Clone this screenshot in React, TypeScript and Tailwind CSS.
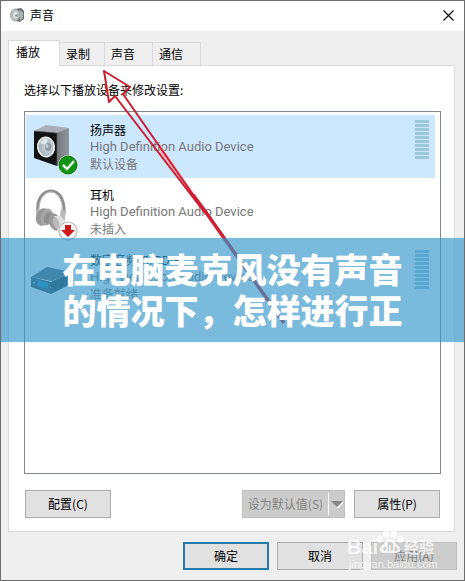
import type { ReactNode } from "react";

const TABS = [
  { label: "播放", width: "w-[52px]" },
  { label: "录制", width: "w-[45px]" },
  { label: "声音", width: "w-12" },
  { label: "通信", width: "w-12" },
];

function TitleIcon() {
  return (
    <svg viewBox="0 0 14 14" className="w-[14px] h-[14px]" aria-hidden="true">
      <path d="M5 1 11 0l3 3v8l-4 3-4-1z" fill="#66706f" />
      <path d="m9 2 4 2v6l-3 3z" fill="#a9b1b1" />
      <ellipse cx="5" cy="7" rx="4.5" ry="6" fill="#b6bebe" stroke="#a3abab" />
      <ellipse cx="5.500" cy="7" rx="2.400" ry="3.600" fill="#dce1e1" />
      <circle cx="6.500" cy="7.500" r="1.300" fill="#88908f" />
    </svg>
  );
}

function SpeakerIcon() {
  return (
    <svg viewBox="0 0 50 54" className="w-[50px] h-[54px] overflow-visible" aria-hidden="true">
      <defs>
        <linearGradient id="side" x1="0" x2="1">
          <stop offset="0" stopColor="#74777b" />
          <stop offset="1" stopColor="#919499" />
        </linearGradient>
        <radialGradient id="cone" cx=".6" cy=".55">
          <stop offset="0" stopColor="#8c9aa3" />
          <stop offset=".35" stopColor="#c5ced3" />
          <stop offset="1" stopColor="#a9b4ba" />
        </radialGradient>
      </defs>
      <path d="m5 9 12-6 23 3-12 6z" fill="#aaaeb4" />
      <path d="m28 11 12-5v29l-12 9z" fill="url(#side)" />
      <path d="m5 9 23 2v33L5 36z" fill="#111213" />
      <path d="m5 9 23 2v33" fill="none" stroke="#5b5e61" strokeWidth=".7" />
      <ellipse cx="17" cy="25" rx="9" ry="10.500" transform="rotate(-8 17 25)" fill="#f3f5f5" />
      <ellipse cx="17" cy="25" rx="7.500" ry="9" transform="rotate(-8 17 25)" fill="url(#cone)" />
      <path d="M11 21q3-6 8-4l-2 6z" fill="#dfe5e8" />
      <ellipse cx="19" cy="25" rx="3" ry="4" fill="#8b9aa5" />
      <ellipse cx="18" cy="24" rx="1.500" ry="2" fill="#c4cfd5" />
      <circle cx="39" cy="43" r="10" fill="#e5f3e3" />
      <circle cx="39" cy="43" r="9" fill="#119316" stroke="#08760c" />
      <path d="m34 43 4 4 7-8" fill="none" stroke="#e9fbe7" strokeWidth="2.500" />
    </svg>
  );
}

function HeadphonesIcon() {
  return (
    <svg viewBox="0 0 50 54" className="w-[50px] h-[54px] overflow-visible" aria-hidden="true">
      <path d="M9 27C7 12 14 4 22 4c9 0 14 10 13 24" fill="none" stroke="#8d8d8d" strokeWidth="3" />
      <path d="M10 26C9 13 15 5 22 5c8 0 12 11 11 19" fill="none" stroke="#c4c4c4" />
      <path d="m8 22 4 1-1 9-4-1zM32 22l4 2v12l-6-2z" fill="#b9b9b9" />
      <ellipse cx="14" cy="30" rx="7" ry="9" transform="rotate(18 14 30)" fill="#999" />
      <ellipse cx="18" cy="30" rx="6" ry="8.500" transform="rotate(14 18 30)" fill="#a8a8a8" />
      <ellipse cx="19" cy="31" rx="4" ry="6" transform="rotate(14 19 31)" fill="#8e8e8e" />
      <ellipse cx="26" cy="35" rx="6" ry="9" transform="rotate(-22 26 35)" fill="#999" />
      <path d="m25 29 7 0 5 6-2 10-7-1q3-8-3-15" fill="#e0e0e0" />
      <ellipse cx="27" cy="36" rx="3" ry="6" transform="rotate(-15 27 36)" fill="#bababa" />
      <circle cx="39" cy="44" r="9" fill="#f8f8f8" stroke="#b9b9b9" strokeWidth="1.200" />
      <path d="M36 38h6v5h4l-7 7-7-7h4z" fill="#cf1719" />
    </svg>
  );
}

function ReceiverIcon() {
  return (
    <svg viewBox="0 0 50 54" className="w-[50px] h-[54px]" aria-hidden="true">
      <path d="m2 25 16-10 24 5-19 9z" fill="#52646e" />
      <path d="m2 25 20 5v12L2 35z" fill="#354a56" />
      <path d="m22 30 20-10v12L22 42z" fill="#263a45" />
      <path d="m9 28 10 3v6l-10-3z" fill="#1686b5" />
      <path d="m4 30 2 1m15 4 1 1" stroke="#c3d6df" />
    </svg>
  );
}

function LevelMeter() {
  return (
    <div className="flex flex-col gap-px pt-[5px]" aria-hidden="true">
      {Array.from({ length: 10 }, (_, i) => (
        <span key={i} className="block w-[14px] h-[3px] bg-[#9dc8dc]" />
      ))}
    </div>
  );
}

type DeviceProps = {
  icon: ReactNode;
  name: string;
  status: string;
  selected?: boolean;
  meter?: boolean;
};

function Device({ icon, name, status, selected, meter }: DeviceProps) {
  return (
    <li className={`flex items-start h-[63px] pl-[3px] pr-[6px] ${selected ? "bg-[#cce8ff]" : ""}`}>
      <div className="pt-[7px]">{icon}</div>
      <div className="flex-1 pl-[11px] pt-[6px] leading-[17px] text-[#777]">
        <p className="text-black">{name}</p>
        <p className="text-[13px] whitespace-nowrap font-['Roboto',sans-serif]">High Definition Audio Device</p>
        <p>{status}</p>
      </div>
      {meter && <LevelMeter />}
    </li>
  );
}

function Button({ children, primary, disabled }: { children: ReactNode; primary?: boolean; disabled?: boolean }) {
  const look = primary
    ? "border-2 border-[#2779aa] bg-[#e1e1e1]"
    : disabled
      ? "border border-[#bfbfbf] bg-[#cccccc] text-[#838383]"
      : "border border-[#adadad] bg-[#e1e1e1]";
  return (
    <button type="button" disabled={disabled} className={`w-[86px] h-7 flex items-center justify-center ${look}`}>
      {children}
    </button>
  );
}

function Arrow() {
  return (
    <svg viewBox="0 0 190 260" className="absolute left-[99px] top-[67px] w-[190px] h-[260px] pointer-events-none" aria-hidden="true">
      <path d="M60 76 105 141v4L60 86z" fill="#f7bac6" />
      <path
        d="M105 145 15 28l-6 6L4 3l26 16-7 7 82 118"
        fill="none"
        stroke="#cb1e30"
        strokeWidth="2"
        strokeLinejoin="round"
      />
      <path d="m93 127 12 16 79 112" fill="none" stroke="#cf1e32" strokeWidth="3.500" />
    </svg>
  );
}

function Watermark() {
  return (
    <div className="absolute right-[27px] bottom-[6px] w-[90px] h-[46px] text-white/75 font-['Liberation_Sans',sans-serif] pointer-events-none">
      <svg viewBox="0 0 30 28" className="absolute left-[29px] top-0 w-7 h-[26px]" aria-hidden="true">
        <g fill="#fff" fillOpacity=".75">
          <ellipse cx="11" cy="6" rx="3.500" ry="5" />
          <ellipse cx="19" cy="6" rx="3.500" ry="5" />
          <ellipse cx="4" cy="12" rx="3" ry="4" />
          <ellipse cx="26" cy="12" rx="3" ry="4" />
          <path
            fillRule="evenodd"
            d="M15 12c-5 0-6 5-9 7-4 4-2 8 3 8h12c5 0 7-4 3-8-3-2-4-7-9-7m0 3c3 0 4 4 7 6 2 2 1 4-1 4H9c-2 0-3-2-1-4 3-2 4-6 7-6"
          />
        </g>
      </svg>
      <div className="flex items-end h-[29px] leading-5 font-bold">
        <span className="w-[34px] text-[20px]">Bai</span>
        <span className="w-[23px] text-[12px] leading-[18px]">du</span>
        <span className="text-[15px] font-['Noto_Sans_CJK_SC',sans-serif]">经验</span>
      </div>
      <p className="pl-[2px] text-[11px] leading-[14px]">jingyan.baidu.com</p>
    </div>
  );
}

export default function App() {
  return (
    <div className="relative flex flex-col w-full min-h-screen bg-[#efefef] border border-[#6d6d6d] text-black text-[12px] font-['Noto_Sans_CJK_SC',sans-serif]">
      <header className="flex items-center h-[30px] bg-white pl-[9px] pr-[10px] pb-[2px]">
        <TitleIcon />
        <h1 className="flex-1 pl-[6px]">声音</h1>
        <button type="button" aria-label="关闭">
          <svg viewBox="0 0 11 11" className="w-[11px] h-[11px]">
            <path d="m.5.5 10 10m0-10-10 10" stroke="#111" strokeWidth="1.200" />
          </svg>
        </button>
      </header>

      <main className="flex-1 flex flex-col px-[7px] pt-[9px]">
        <div role="tablist" className="flex items-end pr-2">
          {TABS.map(({ label, width }, i) => (
            <button
              key={label}
              type="button"
              role="tab"
              aria-selected={i === 0}
              className={`${width} ${
                i === 0
                  ? "relative z-10 -mb-px h-[26px] bg-white border border-b-0 border-[#d9d9d9] text-left pl-[7px] pb-1"
                  : "h-[23px] flex items-center border border-l-0 border-b-0 border-[#d9d9d9] pl-[6px]"
              }`}
            >
              {label}
            </button>
          ))}
        </div>

        <section className="flex-1 flex flex-col bg-white border border-[#d9d9d9] pl-[15px] pr-[13px] mr-[2px]">
          <p className="pt-[15px] pb-3 leading-[18px]">选择以下播放设备来修改设置:</p>
          <ul className="flex-1 flex flex-col gap-[2px] border border-[#828790] pt-[3px] pl-px pr-[5px]">
            <Device icon={<SpeakerIcon />} name="扬声器" status="默认设备" selected meter />
            <Device icon={<HeadphonesIcon />} name="耳机" status="未插入" />
            <Device icon={<ReceiverIcon />} name="数字音频(S/PDIF)" status="准备就绪" meter />
          </ul>
          <div className="flex items-center pt-4 pb-[13px] px-px">
            <Button>配置(C)</Button>
            <div className="ml-auto mr-[9px] flex h-7 w-[103px] border border-[#bfbfbf] bg-[#cccccc] text-[#838383]">
              <button type="button" disabled className="flex-1">
                设为默认值(S)
              </button>
              <button type="button" disabled aria-label="更多默认值选项" className="w-4 my-[2px] flex items-center justify-center border-l border-white">
                <svg viewBox="0 0 12 8" className="w-3 h-2">
                  <path d="m6 8 6-6" stroke="#fff" strokeWidth="1.500" />
                  <path d="M0 1h12L6 7z" fill="#858585" />
                </svg>
              </button>
            </div>
            <Button>属性(P)</Button>
          </div>
        </section>

        <footer className="flex justify-end gap-2 pt-[10px] pb-[10px]">
          <Button primary>确定</Button>
          <Button>取消</Button>
          <Button disabled>应用(A)</Button>
        </footer>
      </main>

      <Arrow />
      <div className="absolute inset-x-0 top-[237px] h-[104px] flex items-center justify-center bg-[#3998cb]/67 pb-[2px]">
        <p className="w-[340px] text-[34px] leading-[41px] font-black text-white">在电脑麦克风没有声音的情况下，怎样进行正</p>
      </div>
      <Watermark />
    </div>
  );
}
